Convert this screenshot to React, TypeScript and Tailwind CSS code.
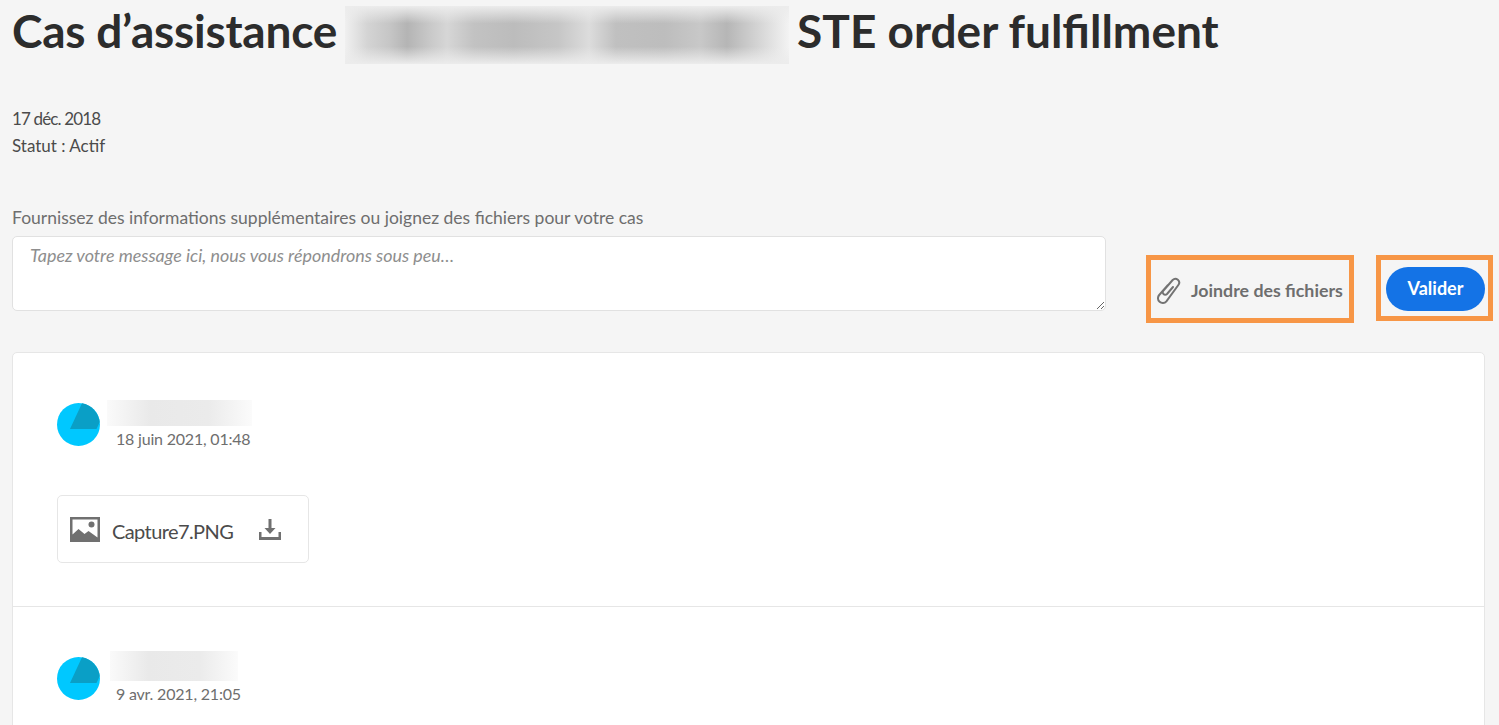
import React from 'react';

const BG = 'bg-[linear-gradient(180deg,#ececec,#ececec00_30%,#ececec00_70%,#ececec),linear-gradient(90deg,#f0f0f0_0%,#d4d4d4_5%,#c6c6c6_10%,#b4b4b4_14%,#c8c8c8_19%,#d6d6d6_23%,#c2c2c2_29%,#bcbcbc_38%,#c6c6c6_48%,#dcdcdc_55%,#c0c0c0_61%,#bdbdbd_72%,#c8c8c8_80%,#b6b6b6_86%,#d4d4d4_93%,#f3f3f3_100%)]';

const Avatar = () => (
  <svg width="43" height="43" viewBox="0 0 43 43" className="shrink-0">
    <circle cx="21.5" cy="21.5" r="21.5" fill="#00c8ff" />
    <path d="M25 .3 13 26h26.500l3.200-7A21.500 21.500 0 0 0 25 .3Z" fill="#0a9fc6" />
  </svg>
);

const ImageIcon = () => (
  <svg width="30" height="26" viewBox="0 0 30 26" className="mt-[2px] shrink-0">
    <path fillRule="evenodd" d="M0 0h30v25H0ZM2.500 2.500v15l6-5.500 6 5 4-3 9 6.500V2.500Z" fill="#707070" />
    <circle cx="21.500" cy="7.500" r="3" fill="#707070" />
  </svg>
);

const DownloadIcon = () => (
  <svg width="22" height="22" viewBox="0 0 22 22" className="shrink-0">
    <path d="M9.500 1h3v9h4L11 16 5.500 10h4Z" fill="#707070" />
    <path d="M0 14h2.500v5h17v-5H22v8H0Z" fill="#707070" />
  </svg>
);

const ClipIcon = () => (
  <svg width="24" height="28" viewBox="0 0 24 28" fill="none" stroke="#737373" strokeWidth="2" strokeLinecap="round" className="shrink-0">
    <path d="M11 8 2.200 18A4.800 4.800 0 0 0 9.400 24.400L21.350 8A3.800 3.800 0 0 0 15.650 3L6.500 13.500A2.400 2.400 0 0 0 10 17L16 10" />
  </svg>
);

const Message = ({ date, nameW, nameH, nameX, dateX }: { date: string; nameW: string; nameH: string; nameX: string; dateX: string }) => (
  <div className="flex items-start gap-[7px]">
    <Avatar />
    <div className={`flex flex-col ${nameX}`}>
      <div className={`${nameH} ${nameW} bg-[linear-gradient(90deg,#fafafa,#e9e9e9_30%,#ebebeb_70%,#fbfbfb)]`} />
      <span className={`mt-px text-[16px] leading-[24px] text-[#6e6e6e] tracking-[-0.2px] ${dateX}`}>{date}</span>
    </div>
  </div>
);

export default function App() {
  return (
    <div className="h-[725px] overflow-hidden bg-[#f5f5f5] pl-3 pr-[14px] pt-[6px] font-['Lato','Noto_Sans',sans-serif]">
      <h1 className="flex h-[58px] items-center gap-2 text-[46px] font-bold leading-none text-[#2c2c2c]">
        <span className="pb-2 tracking-[-0.23px]">Cas d’assistance</span>
        <span className={`h-[58px] w-[444px] ${BG}`} />
        <span className="pb-2">STE order fulfillment</span>
      </h1>

      <div className="mt-[41px] text-[17px] leading-[27px] text-[#4b4b4b]">
        <p className="tracking-[-0.85px]">17 déc. 2018</p>
        <p>Statut : Actif</p>
      </div>

      <div className="mt-[46px] flex items-start">
        <div className="w-[1094px] shrink-0">
          <p className="text-[17.5px] leading-[26px] text-[#6e6e6e]">Fournissez des informations supplémentaires ou joignez des fichiers pour votre cas</p>
          <textarea
            readOnly
            placeholder="Tapez votre message ici, nous vous répondrons sous peu…"
            className="mt-[5px] block h-[75px] w-full rounded-[5px] border border-[#e1e1e1] bg-white px-[17px] py-[5px] text-[17.900px] italic leading-[26px] placeholder:text-[#8e8e8e]"
          />
        </div>
        <div className="mt-[50px] ml-10 flex h-[68px] w-[208px] shrink-0 items-center gap-[10px] border-[5px] border-[#f79646] pl-[6px] pt-[3px] text-[17.800px] font-bold text-[#6e6e6e]">
          <ClipIcon />
          <span>Joindre des fichiers</span>
        </div>
        <div className="mt-[50px] ml-[22px] flex h-[66px] w-[117px] shrink-0 items-center justify-center border-[5px] border-[#f79646]">
          <button className="mt-[2px] ml-[2px] h-[44px] w-[99px] rounded-full bg-[#1473e6] pb-[2px] text-[18px] font-bold text-white">Valider</button>
        </div>
      </div>

      <div className="mt-[29px] rounded-t-[5px] border border-[#e6e6e6] bg-white">
        <div className="h-[254px] border-b border-[#e6e6e6] pl-11 pt-[50px]">
          <Message date="18 juin 2021, 01:48" nameW="w-[145px]" nameH="h-[26px]" nameX="-mt-[3px]" dateX="ml-[9px]" />
          <div className="mt-[44px] flex h-[68px] w-[252px] items-center rounded-[5px] border border-[#e6e6e6] pl-3">
            <ImageIcon />
            <span className="ml-3 w-[121px] shrink-0 whitespace-nowrap pt-[3px] text-[20px] tracking-[-0.6px] text-[#4b4b4b]">Capture7.PNG</span>
            <span className="ml-[26px]"><DownloadIcon /></span>
          </div>
        </div>
        <div className="h-[200px] pl-11 pt-[50px]">
          <Message date="9 avr. 2021, 21:05" nameW="w-[128px]" nameH="h-[30px]" nameX="-mt-[6px] ml-[3px]" dateX="ml-[6px]" />
        </div>
      </div>
    </div>
  );
}
